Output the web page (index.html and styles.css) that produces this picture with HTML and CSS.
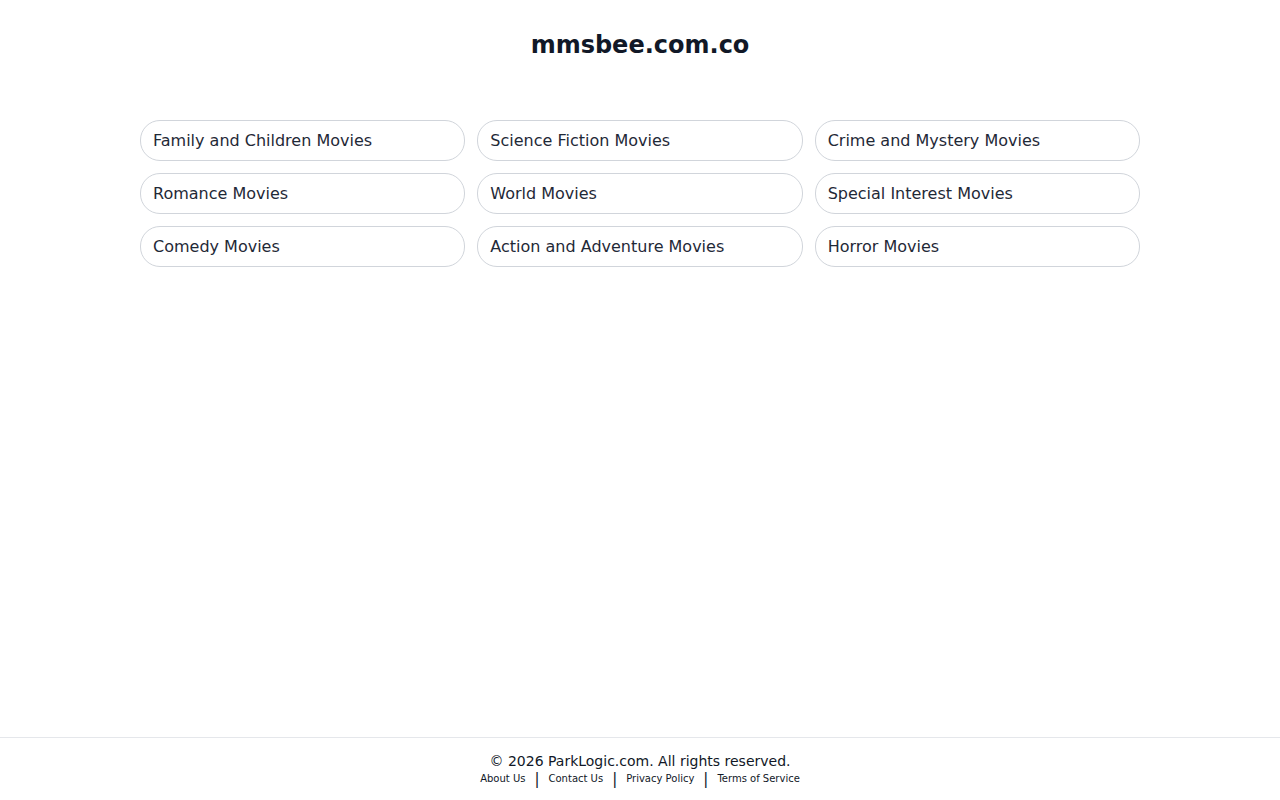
FILE: index.html
```html
<!DOCTYPE html>
<html lang="en">
<head>
    <meta charset="UTF-8">
    <meta name="viewport" content="width=device-width, initial-scale=1.0">
    <title>mmsbee.com.co</title>
    <link rel="stylesheet" href="styles.css">
</head>
<body>
    <div class="page">
        <header class="header">
            <h1>mmsbee.com.co</h1>
        </header>

        <main class="links">
            <a href="#" class="link">Family and Children Movies</a>
            <a href="#" class="link">Science Fiction Movies</a>
            <a href="#" class="link">Crime and Mystery Movies</a>
            <a href="#" class="link">Romance Movies</a>
            <a href="#" class="link">World Movies</a>
            <a href="#" class="link">Special Interest Movies</a>
            <a href="#" class="link">Comedy Movies</a>
            <a href="#" class="link">Action and Adventure Movies</a>
            <a href="#" class="link">Horror Movies</a>
        </main>

        <footer class="footer">
            <div class="copyright">&copy; 2026 ParkLogic.com. All rights reserved.</div>
            <div class="footer-links">
                <a href="#">About Us</a>
                <span class="sep">|</span>
                <a href="#">Contact Us</a>
                <span class="sep">|</span>
                <a href="#">Privacy Policy</a>
                <span class="sep">|</span>
                <a href="#">Terms of Service</a>
            </div>
        </footer>
    </div>
</body>
</html>
```

FILE: styles.css
```css
body {
    margin: 0;
    padding: 0;
    font-family: "DejaVu Sans", sans-serif;
    background-color: #ffffff;
    color: #1f2937;
}
.page {
    display: flex;
    flex-direction: column;
    min-height: 100vh;
}
.header {
    padding-top: 31px;
    text-align: center;
}
.header h1 {
    margin: 0;
    font-size: 24px;
    line-height: 28px;
    font-weight: bold;
    color: #111827;
}
.links {
    width: 1000px;
    margin: 61px auto 0;
    display: grid;
    grid-template-columns: repeat(3, 1fr);
    gap: 12px;
    flex: 1;
    align-content: start;
}
.link {
    display: block;
    height: 39px;
    line-height: 39px;
    padding: 0 12px;
    border: 1px solid #d1d5db;
    border-radius: 20px;
    font-size: 16px;
    color: #1f2937;
    text-decoration: none;
}
.footer {
    border-top: 1px solid #e5e7eb;
    padding: 15px 0 13px;
    text-align: center;
}
.copyright {
    font-size: 14px;
    line-height: 16px;
    margin-bottom: 2px;
    color: #111827;
}
.footer-links {
    display: flex;
    justify-content: center;
    align-items: center;
    gap: 9px;
    line-height: 16px;
}
.footer-links a {
    font-size: 10px;
    color: #111827;
    text-decoration: none;
}
.sep {
    font-size: 15px;
    line-height: 16px;
    color: #111827;
}
```
